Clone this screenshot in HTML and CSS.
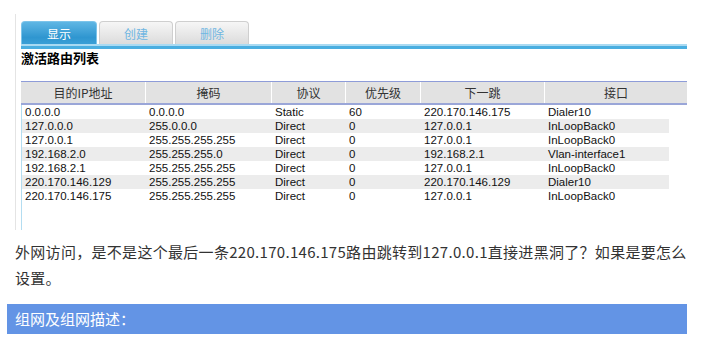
FILE: index.html
```html
<!DOCTYPE html>
<html lang="zh-CN">
<head>
<meta charset="utf-8">
<title>激活路由列表</title>
<link rel="stylesheet" href="styles.css">
</head>
<body>
<div class="post">
  <div class="shot">
    <div class="tabs">
      <div class="tab active">显示</div>
      <div class="tab">创建</div>
      <div class="tab">删除</div>
    </div>
    <div class="tabline"></div>
    <div class="title">激活路由列表</div>
    <div class="table">
      <div class="thead">
        <div class="th">目的IP地址</div>
        <div class="th">掩码</div>
        <div class="th">协议</div>
        <div class="th">优先级</div>
        <div class="th">下一跳</div>
        <div class="th">接口</div>
      </div>
      <div class="tbody">
        <div class="tr"><div>0.0.0.0</div><div>0.0.0.0</div><div>Static</div><div>60</div><div>220.170.146.175</div><div>Dialer10</div></div>
        <div class="tr alt"><div>127.0.0.0</div><div>255.0.0.0</div><div>Direct</div><div>0</div><div>127.0.0.1</div><div>InLoopBack0</div></div>
        <div class="tr"><div>127.0.0.1</div><div>255.255.255.255</div><div>Direct</div><div>0</div><div>127.0.0.1</div><div>InLoopBack0</div></div>
        <div class="tr alt"><div>192.168.2.0</div><div>255.255.255.0</div><div>Direct</div><div>0</div><div>192.168.2.1</div><div>Vlan-interface1</div></div>
        <div class="tr"><div>192.168.2.1</div><div>255.255.255.255</div><div>Direct</div><div>0</div><div>127.0.0.1</div><div>InLoopBack0</div></div>
        <div class="tr alt"><div>220.170.146.129</div><div>255.255.255.255</div><div>Direct</div><div>0</div><div>220.170.146.129</div><div>Dialer10</div></div>
        <div class="tr"><div>220.170.146.175</div><div>255.255.255.255</div><div>Direct</div><div>0</div><div>127.0.0.1</div><div>InLoopBack0</div></div>
      </div>
    </div>
  </div>
  <p class="question">外网访问，是不是这个最后一条220.170.146.175路由跳转到127.0.0.1直接进黑洞了？如果是要怎么设置。</p>
  <div class="section">组网及组网描述：</div>
</div>
</body>
</html>
```

FILE: styles.css
```css
* { box-sizing: border-box; }
html, body { margin: 0; padding: 0; background: #fff; }
body { font-family: "Noto Sans CJK SC", "Liberation Sans", sans-serif; color: #333; }

.post { width: 687px; padding-left: 7px; padding-top: 14px; }

.shot {
  margin-left: 8px;
  height: 216px;
  border-left: 1px solid #e4e4e4;
  padding-left: 5px;
  padding-top: 7px;
  display: flex;
  flex-direction: column;
}

.tabs { display: flex; gap: 2px; height: 23px; }
.tab {
  width: 74px;
  height: 23px;
  border: 1px solid #cfcfcf;
  border-bottom: none;
  border-radius: 4px 4px 0 0;
  background: linear-gradient(#f6f6f6, #dcdcdc);
  color: #6fb6e2;
  font-size: 12px;
  line-height: 24px;
  text-align: center;
}
.tab.active {
  width: 76px;
  border-color: #7cc4ea;
  background: linear-gradient(#5fb6e4, #2f96d0 70%, #3a9fd6);
  color: #fff;
}
.tabline {
  width: 666px;
  height: 5px;
  border-top: 2px solid #a9daf2;
  background: #4aaee0;
}

.title {
  font-size: 13px;
  font-weight: 700;
  color: #000;
  line-height: 14px;
  margin-top: 2px;
  height: 30px;
}

.table { width: 666px; flex: 1; display: flex; flex-direction: column; }
.thead {
  display: grid;
  grid-template-columns: 125px 126px 74px 75px 124px 142px;
  height: 24px;
  background: #e2e2e2;
  border-top: 1px solid #8e9cd8;
  border-bottom: 2px solid #9aa6d8;
}
.th {
  font-size: 12px;
  color: #333;
  text-align: center;
  line-height: 21px;
  border-right: 1px solid #fff;
}
.th:last-child { border-right: none; }

.tbody { flex: 1; border-left: 1px solid #b3ddf1; }
.tr {
  display: grid;
  grid-template-columns: 124px 126px 74px 75px 124px 124px;
  width: 647px;
  height: 14px;
  font-family: "Liberation Sans", Arial, sans-serif;
  font-size: 11.5px;
  line-height: 14px;
  color: #111;
}
.tr > div { padding-left: 3px; white-space: nowrap; }
.tr.alt { background: #ececec; }

.question {
  margin: 9px 0 13px 8px;
  font-size: 15px;
  letter-spacing: 0.3px;
  line-height: 26px;
  color: #333;
  width: 681px;
}

.section {
  width: 680px;
  height: 30px;
  background: #6394e5;
  color: #fff;
  font-size: 15px;
  line-height: 30px;
  padding-left: 8px;
}
```
